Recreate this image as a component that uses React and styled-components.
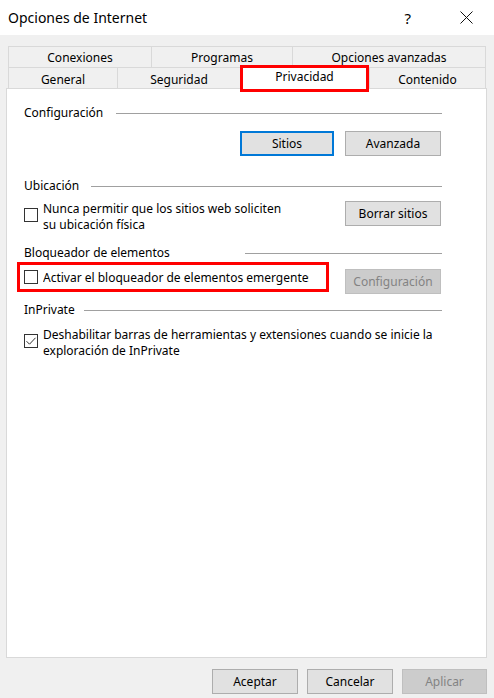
import React from 'react'
import styled, { createGlobalStyle } from 'styled-components'

const GlobalStyle = createGlobalStyle`
  body {
    margin: 0;
    background: #f0f0f0;
    font-family: "Noto Sans", "Open Sans", sans-serif;
    font-size: 12px;
    color: #000;
  }
`

function Check({ checked }) {
  return (
    <Box>
      {checked && (
        <svg width="12" height="12" viewBox="0 0 12 12">
          <path d="M1.5 6.2 L4.5 9.2 L10.5 2.8" fill="none" stroke="#333" strokeWidth="1" />
        </svg>
      )}
    </Box>
  )
}

function GroupHeader({ title, line }) {
  return (
    <Header>
      <span>{title}</span>
      <Rule $w={line} />
    </Header>
  )
}

export default function App() {
  return (
    <Window>
      <GlobalStyle />
      <TitleBar>
        <Title>Opciones de Internet</Title>
        <TitleIcons>
          <Help>?</Help>
          <svg width="13" height="13" viewBox="0 0 13 13">
            <path d="M0.5 0.5 L12.5 12.5 M12.5 0.5 L0.5 12.5" stroke="#111" strokeWidth="1" />
          </svg>
        </TitleIcons>
      </TitleBar>

      <Body>
        <Tabs>
          <TabRow $cols="143px 141px 1fr">
            <Tab>Conexiones</Tab>
            <Tab>Programas</Tab>
            <Tab>Opciones avanzadas</Tab>
          </TabRow>
          <TabRow $cols="109px 123px 129px 1fr">
            <Tab>General</Tab>
            <Tab>Seguridad</Tab>
            <Tab $active>Privacidad</Tab>
            <Tab>Contenido</Tab>
          </TabRow>
        </Tabs>

        <Panel>
          <GroupHeader title="Configuración" line={326} />
          <ButtonRow>
            <Button $focused $w={94}>Sitios</Button>
            <Button $w={96}>Avanzada</Button>
          </ButtonRow>

          <GroupHeader title="Ubicación" line={351} />
          <OptionRow $after={11}>
            <CheckLabel>
              <Check />
              <span>Nunca permitir que los sitios web soliciten<br />su ubicación física</span>
            </CheckLabel>
            <Button $w={96}>Borrar sitios</Button>
          </OptionRow>

          <GroupHeader title="Bloqueador de elementos" line={197} />
          <OptionRow $after={7}>
            <Highlight>
              <Check />
              <Clipped>Activar el bloqueador de elementos emergentes</Clipped>
            </Highlight>
            <Button $w={96} $disabled $top={1}>Configuración</Button>
          </OptionRow>

          <GroupHeader title="InPrivate" line={358} />
          <CheckLabel $top={10}>
            <Check checked />
            <span>Deshabilitar barras de herramientas y extensiones cuando se inicie la<br />exploración de InPrivate</span>
          </CheckLabel>
        </Panel>

        <Footer>
          <Button $w={86}>Aceptar</Button>
          <Button $w={86}>Cancelar</Button>
          <Button $w={85} $disabled>Aplicar</Button>
        </Footer>
      </Body>
    </Window>
  )
}

const Window = styled.div`
  width: 494px;
  height: 698px;
  display: flex;
  flex-direction: column;
  background: #f0f0f0;
  overflow: hidden;
`

const TitleBar = styled.div`
  height: 35px;
  background: #fff;
  display: flex;
  align-items: center;
  justify-content: space-between;
  padding: 0 21px 0 8px;
`

const Title = styled.div`
  font-size: 14px;
  margin-top: -1px;
`

const TitleIcons = styled.div`
  display: flex;
  align-items: center;
  gap: 49px;
`

const Help = styled.span`
  font-size: 15px;
`

const Body = styled.div`
  flex: 1;
  display: flex;
  flex-direction: column;
  padding: 11px 7px 0 6px;
`

const Tabs = styled.div`
  margin: 0 1px 0 2px;
`

const TabRow = styled.div`
  display: grid;
  grid-template-columns: ${p => p.$cols};
  height: 21px;
`

const Tab = styled.div`
  display: flex;
  align-items: center;
  justify-content: center;
  border: 1px solid #d9d9d9;
  border-right: none;
  border-bottom: none;
  background: #f0f0f0;
  &:last-child {
    border-right: 1px solid #d9d9d9;
  }
  ${p => p.$active && `
    background: #fff;
    border: 3px solid #f00;
    margin-top: -2px;
    margin-bottom: -1px;
    padding-bottom: 4px;
    position: relative;
    z-index: 1;
  `}
`

const Panel = styled.div`
  height: 570px;
  box-sizing: border-box;
  background: #fff;
  border: 1px solid #d9d9d9;
  padding: 15px 45px 0 17px;
  display: flex;
  flex-direction: column;
`

const Header = styled.div`
  display: flex;
  align-items: center;
  justify-content: space-between;
  height: 16px;
  line-height: 16px;
  margin-top: 1px;
  margin-bottom: -1px;
`

const Rule = styled.div`
  width: ${p => p.$w}px;
  border-top: 1px solid #a0a0a0;
  margin-right: -1px;
`

const ButtonRow = styled.div`
  display: flex;
  justify-content: flex-end;
  gap: 11px;
  margin: 11px 0 21px;
`

const Button = styled.div`
  width: ${p => p.$w}px;
  height: 25px;
  box-sizing: border-box;
  margin-top: ${p => p.$top || 0}px;
  display: flex;
  align-items: center;
  justify-content: center;
  background: ${p => (p.$disabled ? '#cccccc' : '#e1e1e1')};
  color: ${p => (p.$disabled ? '#838383' : '#000')};
  border: ${p => (p.$focused ? '2px solid #0078d7' : p.$disabled ? '1px solid #bfbfbf' : '1px solid #adadad')};
`

const OptionRow = styled.div`
  display: flex;
  justify-content: space-between;
  align-items: flex-start;
  margin: 8px 0 ${p => p.$after}px;
`

const CheckLabel = styled.label`
  display: flex;
  align-items: flex-start;
  gap: 5px;
  line-height: 16px;
  margin-top: ${p => p.$top || 0}px;
`

const Box = styled.span`
  width: 14px;
  height: 14px;
  box-sizing: border-box;
  flex: none;
  border: 1px solid #333;
  background: #fff;
  margin-top: 7px;
  display: flex;
  align-items: center;
  justify-content: center;
`

const Highlight = styled.div`
  display: flex;
  align-items: center;
  gap: 5px;
  height: 24px;
  width: 302px;
  border: 3px solid #f00;
  margin: -6px 0 0 -7px;
  padding-left: 4px;
  box-sizing: content-box;
  & ${Box} {
    margin-top: 0;
  }
`

const Clipped = styled.span`
  width: 266px;
  white-space: nowrap;
  overflow: hidden;
`

const Footer = styled.div`
  display: flex;
  justify-content: flex-end;
  gap: 9px;
  margin: 11px 0 0 0;
`
